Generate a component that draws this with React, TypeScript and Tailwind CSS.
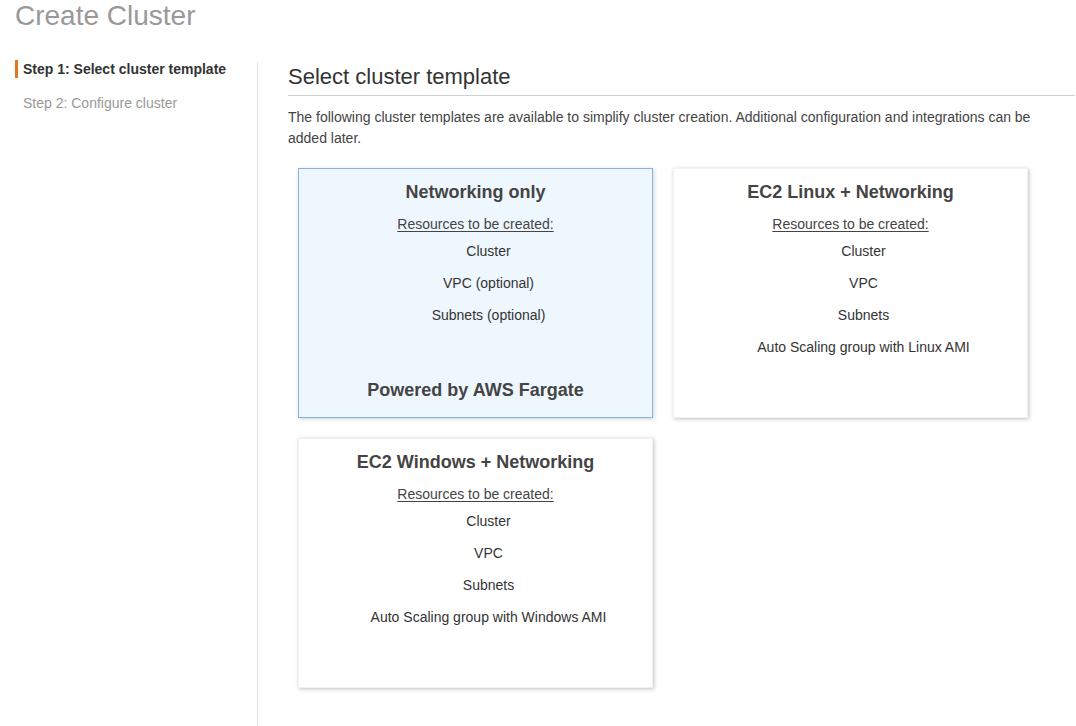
import React from "react";

type Card = {
  title: string;
  items: string[];
  footer?: string;
  selected?: boolean;
};

const cards: Card[] = [
  {
    title: "Networking only",
    items: ["Cluster", "VPC (optional)", "Subnets (optional)"],
    footer: "Powered by AWS Fargate",
    selected: true,
  },
  {
    title: "EC2 Linux + Networking",
    items: ["Cluster", "VPC", "Subnets", "Auto Scaling group with Linux AMI"],
  },
  {
    title: "EC2 Windows + Networking",
    items: ["Cluster", "VPC", "Subnets", "Auto Scaling group with Windows AMI"],
  },
];

function TemplateCard({ card }: { card: Card }) {
  return (
    <div
      className={
        card.selected
          ? "box-border h-[250px] flex flex-col items-center pt-[12px] pb-[16px] border border-[#85b6e2] bg-[#eff7fe] shadow-[1px_1px_4px_rgba(0,0,0,0.18)]"
          : "box-border h-[250px] flex flex-col items-center pt-[12px] pb-[16px] border border-[#f2f2f2] bg-white shadow-[1px_1px_4px_rgba(0,0,0,0.25)]"
      }
    >
      <div className="text-[18px] leading-[22px] font-bold text-[#444]">{card.title}</div>
      <div className="mt-[11px] text-[14px] leading-[20px] text-[#444] underline underline-offset-2">
        Resources to be created:
      </div>
      <ul className="mt-[7px] flex flex-col gap-[12px] pl-[26px] text-[14px] leading-[20px] text-[#333] text-center">
        {card.items.map((it) => (
          <li key={it}>{it}</li>
        ))}
      </ul>
      {card.footer && (
        <div className="mt-auto text-[18px] leading-[22px] font-bold text-[#444]">{card.footer}</div>
      )}
    </div>
  );
}

export default function App() {
  return (
    <div className="min-h-[726px] bg-white font-['Liberation_Sans',Arial,Helvetica,sans-serif]">
      <h1 className="h-[60px] pl-[15px] text-[28px] leading-[32px] text-[#999]">Create Cluster</h1>
      <div className="flex">
        <aside className="w-[242px] ml-[15px] flex flex-col gap-[16px] text-[14px] leading-[18px]">
          <div className="border-l-[3px] border-[#dd7a1c] pl-[5px] font-bold text-[#333]">
            Step 1: Select cluster template
          </div>
          <div className="pl-[8px] text-[#999]">Step 2: Configure cluster</div>
        </aside>
        <main className="flex-1 mt-[2px] min-h-[664px] border-l border-[#e1e1e1] pl-[30px] pr-[1px]">
          <h2 className="pt-[2px] pb-[6px] border-b border-[#cfcfcf] text-[22px] leading-[25px] text-[#333]">
            Select cluster template
          </h2>
          <p className="mt-[11px] pr-[30px] text-[14px] leading-[21px] text-[#444]">
            The following cluster templates are available to simplify cluster creation. Additional configuration
            and integrations can be added later.
          </p>
          <div className="mt-[19px] ml-[10px] grid grid-cols-[355px_355px] gap-[20px]">
            {cards.map((c) => (
              <TemplateCard key={c.title} card={c} />
            ))}
          </div>
        </main>
      </div>
    </div>
  );
}
